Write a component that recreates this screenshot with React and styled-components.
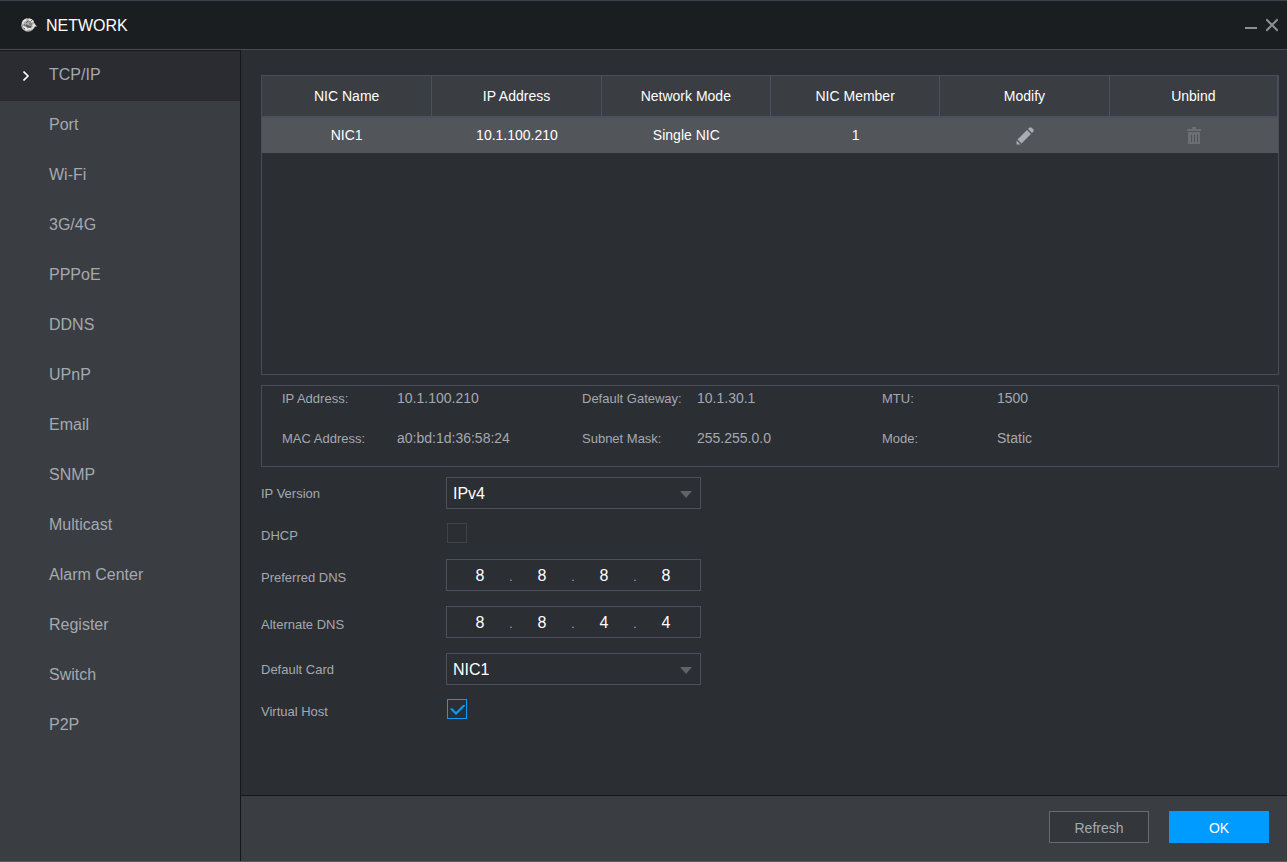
import React, { useState } from 'react';
import styled, { createGlobalStyle } from 'styled-components';

const menu = [
  'TCP/IP', 'Port', 'Wi-Fi', '3G/4G', 'PPPoE', 'DDNS', 'UPnP', 'Email',
  'SNMP', 'Multicast', 'Alarm Center', 'Register', 'Switch', 'P2P',
];

const columns = ['NIC Name', 'IP Address', 'Network Mode', 'NIC Member', 'Modify', 'Unbind'];

const details = [
  ['IP Address:', '10.1.100.210'],
  ['Default Gateway:', '10.1.30.1'],
  ['MTU:', '1500'],
  ['MAC Address:', 'a0:bd:1d:36:58:24'],
  ['Subnet Mask:', '255.255.0.0'],
  ['Mode:', 'Static'],
];

const GlobeIcon = () => (
  <svg width="16" height="16" viewBox="0 0 16 16" aria-hidden="true">
    <circle cx="7" cy="8" r="6.8" fill="#a9a9a9" />
    <path d="M1 6Q2 2 6 1.5L5 4 3 5 2 8zM8 1.5q3 0 5 3l-2 1-2-1-2 0zM2 9l3 1 2 2-1 2q-3-1-4-5z" fill="#e9e9e9" />
    <path d="M5 6l2-2 3 1M4 9L3 7M10 3l1 1M8 7h3M3 11l1 1" fill="none" stroke="#666" />
    <path d="M5 8q4 4 8 0" fill="none" stroke="#555" strokeWidth="2" />
    <path d="M7 12q5 0 6-3" fill="none" stroke="#e0e0e0" strokeWidth="2" />
    <path d="M10 9.5L13 6l3 3.500z" fill="#e0e0e0" />
  </svg>
);

const MinimizeIcon = () => (
  <svg width="12" height="14" viewBox="0 0 12 14" aria-hidden="true">
    <path d="M0 10h12" stroke="#8d8e90" strokeWidth="2" />
  </svg>
);

const CloseIcon = () => (
  <svg width="12" height="14" viewBox="0 0 12 14" aria-hidden="true">
    <path d="M1 2l10 10M11 2L1 12" stroke="#8d8e90" strokeWidth="2" strokeLinecap="square" />
  </svg>
);

const ChevronIcon = () => (
  <svg width="7" height="10" viewBox="0 0 7 10" aria-hidden="true">
    <path d="M0.500 0.500L5 5 0.500 9.500" fill="none" stroke="#fff" strokeWidth="1.600" />
  </svg>
);

const PencilIcon = () => (
  <svg width="18" height="18" viewBox="0 0 18 18" aria-hidden="true">
    <path d="M0.5 17.5v-4l4 4z" fill="#a9acb5" />
    <path d="M1.5 12.5l9.5-9.5 4 4-9.5 9.5z" fill="#a9acb5" />
    <path d="M12 2l1.5-1.5h2l2 2v2L16 6z" fill="#a9acb5" />
  </svg>
);

const TrashIcon = () => (
  <svg width="14" height="18" viewBox="0 0 14 18" aria-hidden="true">
    <path d="M5 0h4v2h5v2H0V2h5z" fill="#6b6e73" />
    <path d="M1 5h12v12H1z" fill="#6b6e73" />
    <path d="M4.5 8v7M7.5 8v7M10.5 8v7" stroke="#505358" />
  </svg>
);

function Dropdown({ id, options }) {
  return (
    <SelectWrap>
      <Select id={id} defaultValue={options[0]}>
        {options.map((o) => <option key={o}>{o}</option>)}
      </Select>
      <Arrow width="12" height="7" viewBox="0 0 12 7" aria-hidden="true">
        <path d="M0 0h12L6 7z" fill="#5f6266" />
      </Arrow>
    </SelectWrap>
  );
}

function IpInput({ id, label, value }) {
  const [parts, setParts] = useState(value.split('.'));
  const change = (i, v) => setParts(parts.map((p, n) => (n === i ? v : p)));

  return (
    <IpBox>
      {parts.map((part, i) => (
        <React.Fragment key={i}>
          {i > 0 && <Dot>.</Dot>}
          <Octet
            id={i === 0 ? id : undefined}
            aria-label={`${label} ${i + 1}`}
            maxLength={3}
            value={part}
            onChange={(e) => change(i, e.target.value)}
          />
        </React.Fragment>
      ))}
    </IpBox>
  );
}

const App = () => {
  const [active, setActive] = useState('TCP/IP');

  return (
    <>
      <GlobalStyle />
      <Window>
        <TitleBar>
          <GlobeIcon />
          <Title>NETWORK</Title>
          <WindowButton type="button" aria-label="Minimize"><MinimizeIcon /></WindowButton>
          <WindowButton type="button" aria-label="Close"><CloseIcon /></WindowButton>
        </TitleBar>
        <Body>
          <Sidebar>
            {menu.map((item) => (
              <MenuItem key={item} type="button" $active={item === active} onClick={() => setActive(item)}>
                <Marker>{item === active && <ChevronIcon />}</Marker>
                <MenuText>{item}</MenuText>
              </MenuItem>
            ))}
          </Sidebar>
          <Main>
            <Content>
              <TablePanel>
                <Table>
                  <thead>
                    <tr>{columns.map((c) => <Th key={c}>{c}</Th>)}</tr>
                  </thead>
                  <tbody>
                    <tr>
                      <Td>NIC1</Td>
                      <Td>10.1.100.210</Td>
                      <Td>Single NIC</Td>
                      <Td>1</Td>
                      <Td><IconButton type="button" aria-label="Modify"><PencilIcon /></IconButton></Td>
                      <Td><IconButton type="button" aria-label="Unbind" disabled><TrashIcon /></IconButton></Td>
                    </tr>
                  </tbody>
                </Table>
              </TablePanel>

              <Details>
                {details.map(([name, value]) => (
                  <Detail key={name}>
                    <dt>{name}</dt>
                    <dd>{value}</dd>
                  </Detail>
                ))}
              </Details>

              <Form>
                <Row>
                  <Label htmlFor="version">IP Version</Label>
                  <Dropdown id="version" options={['IPv4', 'IPv6']} />
                </Row>
                <Row $space={2}>
                  <Label htmlFor="dhcp" $short>DHCP</Label>
                  <Checkbox id="dhcp" type="checkbox" />
                </Row>
                <Row $space={1}>
                  <Label htmlFor="dns1" $low>Preferred DNS</Label>
                  <IpInput id="dns1" label="Preferred DNS" value="8.8.8.8" />
                </Row>
                <Row $space={1}>
                  <Label htmlFor="dns2" $low>Alternate DNS</Label>
                  <IpInput id="dns2" label="Alternate DNS" value="8.8.4.4" />
                </Row>
                <Row>
                  <Label htmlFor="card">Default Card</Label>
                  <Dropdown id="card" options={['NIC1']} />
                </Row>
                <Row $space={2}>
                  <Label htmlFor="host" $short>Virtual Host</Label>
                  <Checkbox id="host" type="checkbox" defaultChecked />
                </Row>
              </Form>
            </Content>
            <Footer>
              <Button type="button">Refresh</Button>
              <Button type="button" $primary>OK</Button>
            </Footer>
          </Main>
        </Body>
      </Window>
    </>
  );
};

const GlobalStyle = createGlobalStyle`
  * {
    box-sizing: border-box;
  }

  body {
    margin: 0;
    background: #2b2e33;
    color: #a5a9b0;
    font-family: "Liberation Sans", Arial, sans-serif;
    font-size: 14px;
  }

  button, input, select {
    font-family: inherit;
  }
`;

const Window = styled.div`
  display: flex;
  flex-direction: column;
  min-height: 100vh;
  border-top: 1px solid #39434c;
  border-bottom: 1px solid #4f5d63;
`;

const TitleBar = styled.header`
  display: flex;
  align-items: center;
  height: 49px;
  padding: 0 9px 0 21px;
  background: #1b1e21;
  border-bottom: 1px solid #4a4c51;
`;

const Title = styled.h1`
  flex: 1;
  margin: 0;
  padding: 2px 0 0 9px;
  color: #fff;
  font-size: 16px;
  font-weight: 400;
`;

const WindowButton = styled.button`
  display: flex;
  margin-left: 9px;
  padding: 0;
  background: none;
  border: none;
  cursor: pointer;
`;

const Body = styled.div`
  display: flex;
  flex: 1;
`;

const Sidebar = styled.nav`
  flex: 0 0 241px;
  background: #3a3d41;
  border-top: 1px solid #15171a;
  border-right: 1px solid #15171a;
`;

const MenuItem = styled.button`
  display: flex;
  align-items: center;
  width: 100%;
  height: 50px;
  padding: 0 0 0 23px;
  background: ${({ $active }) => ($active ? '#2a2c31' : 'transparent')};
  border: none;
  color: #a5a9b0;
  font-size: 16px;
  text-align: left;
  cursor: pointer;
`;

const Marker = styled.span`
  display: flex;
  width: 26px;
`;

const MenuText = styled.span`
  padding-bottom: 2px;
`;

const Main = styled.main`
  display: flex;
  flex: 1;
  flex-direction: column;
  min-width: 0;
`;

const Content = styled.div`
  flex: 1;
  padding: 25px 8px 20px 20px;
`;

const TablePanel = styled.div`
  min-height: 300px;
  border: 1px solid #484c59;
`;

const Table = styled.table`
  width: 100%;
  table-layout: fixed;
  border-spacing: 0;
  color: #fff;
  text-align: center;
`;

const Th = styled.th`
  height: 42px;
  padding: 0;
  background: #3a3d41;
  border-bottom: 2px solid #4a5060;
  font-weight: 400;

  & + & {
    border-left: 1px solid #4a5060;
  }

  &:last-child {
    border-right: 1px solid #4a5060;
  }
`;

const Td = styled.td`
  height: 35px;
  padding: 0 0 2px;
  background: #525559;

  & + & {
    padding-left: 2px;
  }
`;

const IconButton = styled.button`
  display: inline-flex;
  padding: 2px 0 0;
  background: none;
  border: none;
  vertical-align: middle;
`;

const Details = styled.dl`
  display: grid;
  grid-template-columns: repeat(auto-fill, 300px);
  row-gap: 16px;
  margin: 10px 0;
  padding: 0 20px 16px;
  border: 1px solid #484c59;
`;

const Detail = styled.div`
  display: flex;
  height: 24px;
  line-height: 24px;

  dt {
    width: 115px;
    padding-top: 1px;
    font-size: 13px;
  }

  dd {
    margin: 0;
  }
`;

const Form = styled.form`
  display: flex;
  flex-direction: column;
  gap: 14px;
`;

const Row = styled.div`
  display: flex;
  align-items: flex-start;
  padding-bottom: ${({ $space }) => $space || 0}px;
`;

const Label = styled.label`
  width: 185px;
  height: ${({ $short }) => ($short ? 20 : 32)}px;
  font-size: 13px;
  line-height: ${({ $short, $low }) => ($short ? 26 : $low ? 38 : 34)}px;
`;

const SelectWrap = styled.div`
  position: relative;
  width: 255px;
`;

const Select = styled.select`
  display: block;
  width: 100%;
  height: 32px;
  padding: 0 30px 0 6px;
  appearance: none;
  background: #2b2e33;
  border: 1px solid #4a5060;
  border-radius: 0;
  color: #fff;
  font-size: 16px;
`;

const Arrow = styled.svg`
  position: absolute;
  top: 14px;
  right: 9px;
  pointer-events: none;
`;

const Checkbox = styled.input`
  width: 20px;
  height: 20px;
  margin: 0 1px;
  appearance: none;
  border: 1px solid #404247;

  &:checked {
    border-color: #0a9bff;
  }

  &:checked::after {
    content: '';
    display: block;
    width: 18px;
    height: 18px;
    background: #0a9bff;
    clip-path: polygon(2px 9px, 4px 8px, 8px 12px, 15px 5px, 17px 5px, 17px 6px, 8px 15px);
  }
`;

const IpBox = styled.div`
  display: flex;
  align-items: center;
  width: 255px;
  height: 32px;
  padding: 2px 0 0 5px;
  border: 1px solid #4a5060;
`;

const Octet = styled.input`
  width: 56px;
  padding: 0;
  background: none;
  border: none;
  outline: none;
  color: #fff;
  font-size: 16px;
  text-align: center;
`;

const Dot = styled.span`
  width: 6px;
  padding-top: 2px;
  font-size: 12px;
  text-align: center;
`;

const Footer = styled.footer`
  display: flex;
  justify-content: flex-end;
  gap: 20px;
  padding: 15px 18px 18px;
  background: #3a3d41;
  border-top: 1px solid #15171a;
`;

const Button = styled.button`
  width: 100px;
  height: 32px;
  padding: 2px 0 0;
  background: ${({ $primary }) => ($primary ? '#009bff' : '#33373b')};
  border: 1px solid ${({ $primary }) => ($primary ? '#009bff' : '#686b74')};
  color: ${({ $primary }) => ($primary ? '#fff' : '#a5a9b0')};
  font-size: 14px;
  cursor: pointer;
`;

export default App;
